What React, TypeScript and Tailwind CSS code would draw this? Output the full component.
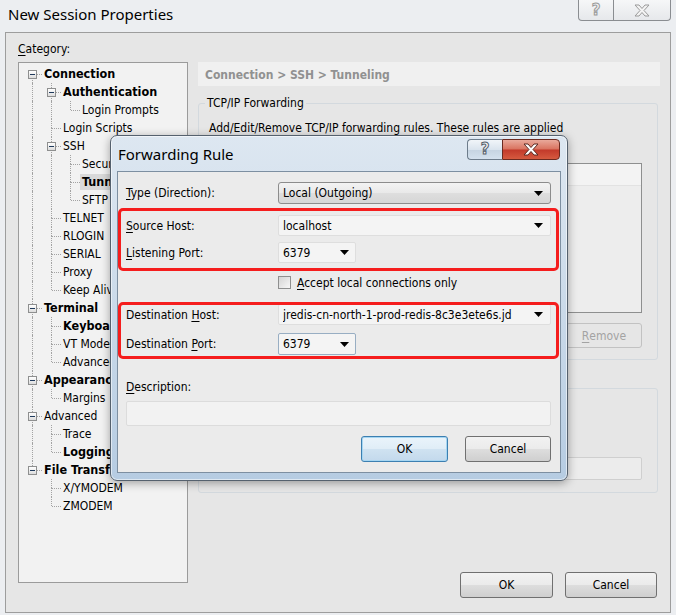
import React from "react";

type TNode = { label: string; bold?: boolean; selected?: boolean; children?: TNode[] };

const TREE: TNode[] = [
  {
    label: "Connection",
    bold: true,
    children: [
      { label: "Authentication", bold: true, children: [{ label: "Login Prompts" }] },
      { label: "Login Scripts" },
      {
        label: "SSH",
        children: [{ label: "Security" }, { label: "Tunneling", bold: true, selected: true }, { label: "SFTP" }],
      },
      { label: "TELNET" },
      { label: "RLOGIN" },
      { label: "SERIAL" },
      { label: "Proxy" },
      { label: "Keep Alive" },
    ],
  },
  { label: "Terminal", bold: true, children: [{ label: "Keyboard", bold: true }, { label: "VT Modes" }, { label: "Advanced" }] },
  { label: "Appearance", bold: true, children: [{ label: "Margins" }] },
  { label: "Advanced", children: [{ label: "Trace" }, { label: "Logging", bold: true }] },
  { label: "File Transfer", bold: true, children: [{ label: "X/YMODEM" }, { label: "ZMODEM" }] },
];

type Row = { node: TNode; anc: boolean[]; hasNext: boolean; first: boolean };

function flatten(nodes: TNode[], anc: boolean[], out: Row[]): Row[] {
  nodes.forEach((n, i) => {
    const hasNext = i < nodes.length - 1;
    out.push({ node: n, anc, hasNext, first: anc.length === 0 && i === 0 });
    if (n.children) flatten(n.children, [...anc, hasNext], out);
  });
  return out;
}

function TreeRow({ r }: { r: Row }) {
  return (
    <div className="flex h-[18px] items-center whitespace-nowrap">
      {r.anc.map((c, i) => (
        <div key={i} className="relative h-full w-[19px] shrink-0">
          {c && <div className="absolute left-[9px] top-0 h-full border-l border-dotted border-[#a3a3a3]" />}
        </div>
      ))}
      <div className="relative h-full w-[19px] shrink-0">
        {!r.first && <div className="absolute left-[9px] top-0 h-[9px] border-l border-dotted border-[#a3a3a3]" />}
        {r.hasNext && <div className="absolute left-[9px] top-[9px] h-[9px] border-l border-dotted border-[#a3a3a3]" />}
        <div className="absolute left-[10px] top-[9px] w-[9px] border-t border-dotted border-[#a3a3a3]" />
        {r.node.children && (
          <div className="absolute left-[5px] top-[5px] flex h-[9px] w-[9px] items-center justify-center border border-[#8e8f8f] bg-[linear-gradient(#ffffff,#dcdcdc)]">
            <div className="h-px w-[5px] bg-[#1f3a5c]" />
          </div>
        )}
      </div>
      <span
        className={
          (r.node.bold ? "font-bold text-[12.5px] " : "") +
          (r.node.selected ? "bg-[#d9d9d9] " : "") +
          "px-[2px] leading-[16px] text-black"
        }
      >
        {r.node.label}
      </span>
    </div>
  );
}

function Arrow() {
  return (
    <svg width="9" height="5" viewBox="0 0 9 5" className="shrink-0">
      <polygon points="0,0 9,0 4.5,5" fill="#000" />
    </svg>
  );
}

function U({ children }: { children: React.ReactNode }) {
  return <span className="underline underline-offset-[2px]">{children}</span>;
}

function WinButton({ children, className = "" }: { children: React.ReactNode; className?: string }) {
  return (
    <div
      className={
        "flex items-center justify-center rounded-[3px] border border-[#707070] bg-[linear-gradient(180deg,#f2f2f2_0%,#ebebeb_48%,#dddddd_52%,#cfcfcf_100%)] text-black " +
        className
      }
    >
      {children}
    </div>
  );
}

function CaptionX({ color, stroke }: { color: string; stroke: string }) {
  return (
    <svg width="16" height="13" viewBox="0 0 16 13">
      <polygon
        points="1,1 5,1 8,4.5 11,1 15,1 10,6.5 15,12 11,12 8,8.5 5,12 1,12 6,6.5"
        fill={color}
        stroke={stroke}
        strokeWidth="1"
        strokeLinejoin="round"
      />
    </svg>
  );
}

export default function App() {
  const rows = flatten(TREE, [], []);
  return (
    <div className="relative h-[615px] w-[676px] overflow-hidden bg-[#eceef1] font-['DejaVu_Sans_Condensed','DejaVu_Sans',sans-serif] text-[12px] text-black">
      {/* Title bar */}
      <div className="flex h-[32px] items-start">
        <div className="ml-[8px] mt-[4px] font-['Noto_Sans',sans-serif] text-[15px] leading-[20px] text-black">
          New Session Properties
        </div>
        <div className="ml-auto mr-[5px] flex h-[21px]">
          <div className="flex w-[36px] items-center justify-center rounded-bl-[4px] border border-t-0 border-[#8a8d91] bg-[linear-gradient(#f6f7f8,#e6e8eb)]">
            <span className="font-['DejaVu_Sans',sans-serif] text-[15px] font-bold leading-none text-transparent [-webkit-text-stroke:1px_#9a9a9a]">
              ?
            </span>
          </div>
          <div className="flex w-[57px] items-center justify-center rounded-br-[4px] border border-l-0 border-t-0 border-[#8a8d91] bg-[linear-gradient(#f6f7f8,#e6e8eb)]">
            <CaptionX color="#f4f4f4" stroke="#9a9a9a" />
          </div>
        </div>
      </div>

      {/* Client area */}
      <div className="ml-[5px] h-[581px] w-[666px] border border-[#9d9d9d] bg-[#e6e6e6] pl-[12px] pt-[8px]">
        <div className="h-[16px] leading-[16px]">
          <U>C</U>ategory:
        </div>
        <div className="mt-[5px] flex">
          {/* Tree */}
          <div className="h-[521px] w-[170px] shrink-0 border border-[#9b9b9b] bg-[#f2f2f2] pl-[4px] pt-[2px]">
            {rows.map((r, i) => (
              <TreeRow key={i} r={r} />
            ))}
          </div>

          {/* Right panel */}
          <div className="ml-[10px] flex w-[462px] flex-col">
            <div className="flex h-[24px] items-center bg-[#f0f0f0] px-[7px] pt-px font-bold text-[#919191]">
              Connection &gt; SSH &gt; Tunneling
            </div>

            <div className="relative mt-[17px] h-[257px] w-[460px] rounded-[3px] border border-[#d3d9de] pl-[10px] pr-[15px] pt-[16px]">
              <div className="absolute -top-[9px] left-[6px] bg-[#e6e6e6] px-[2px] leading-[16px]">TCP/IP Forwarding</div>
              <div className="leading-[16px]">Add/Edit/Remove TCP/IP forwarding rules. These rules are applied</div>
              <div className="leading-[16px]">to the current session when it is connected.</div>
              <div className="mt-[11px] h-[150px] border border-[#8e8f8f] bg-[#ededed]">
                <div className="h-[22px] border-b border-[#e2e2e2] bg-[#f3f3f3]" />
              </div>
              <div className="mt-[10px] flex justify-end gap-[10px]">
                <div className="flex h-[25px] w-[76px] items-center justify-center rounded-[3px] border border-[#c2c2c2] text-[#a3a3a3]">
                  <U>A</U>dd...
                </div>
                <div className="flex h-[25px] w-[76px] items-center justify-center rounded-[3px] border border-[#c2c2c2] text-[#a3a3a3]">
                  <U>E</U>dit...
                </div>
                <div className="flex h-[25px] w-[76px] items-center justify-center rounded-[3px] border border-[#c2c2c2] text-[#a3a3a3]">
                  <U>R</U>emove
                </div>
              </div>
            </div>

            <div className="relative mt-[28px] h-[105px] w-[460px] rounded-[3px] border border-[#d3d9de] pl-[10px] pr-[15px] pt-[20px]">
              <div className="absolute -top-[9px] left-[6px] bg-[#e6e6e6] px-[2px] leading-[16px]">X11 Forwarding</div>
              <div className="leading-[16px]">Remote command:</div>
              <div className="mt-[32px] h-[23px] rounded-[2px] border border-[#cfcfcf] bg-[#ececec]" />
            </div>

            <div className="mt-[79px] flex justify-end gap-[12px] pr-[3px]">
              <WinButton className="h-[26px] w-[93px]">OK</WinButton>
              <WinButton className="h-[26px] w-[92px]">Cancel</WinButton>
            </div>
          </div>
        </div>
      </div>

      {/* Forwarding Rule dialog */}
      <div className="absolute left-[110px] top-[135px] flex h-[346px] w-[458px] flex-col rounded-[7px] border border-[#55616e] bg-[linear-gradient(180deg,#dde7f1_0%,#ccdbea_45%,#b6cce2_100%)] shadow-[0_2px_10px_rgba(0,0,0,0.35),inset_0_0_0_1px_rgba(255,255,255,0.55)]">
        <div className="flex h-[35px] items-start">
          <div className="ml-[7px] mt-[8px] font-['Noto_Sans',sans-serif] text-[15px] leading-[20px] text-black">
            Forwarding Rule
          </div>
          <div className="ml-auto mr-[7px] mt-[3px] flex h-[21px]">
            <div className="flex w-[35px] items-center justify-center rounded-l-[4px] border border-r-0 border-[#6d7c8b] bg-[linear-gradient(180deg,#f1f5f9_0%,#dae4ee_50%,#c5d3e1_51%,#d4e1ee_100%)]">
              <span className="font-['DejaVu_Sans',sans-serif] text-[15px] font-bold leading-none text-[#f4f6f8] [-webkit-text-stroke:1px_#56606b]">
                ?
              </span>
            </div>
            <div className="flex w-[58px] items-center justify-center rounded-r-[4px] border border-[#6b2a20] bg-[linear-gradient(180deg,#e9a99b_0%,#d9735f_48%,#c2392a_52%,#d55a3f_100%)]">
              <CaptionX color="#ffffff" stroke="#5a2a22" />
            </div>
          </div>
        </div>
        <div className="mx-[6px] mb-[7px] h-[302px] border border-[#7d8fa1] bg-[#ebebeb] pl-[8px] pr-[9px] pt-[10px]">
          {/* Type */}
          <div className="grid grid-cols-[152px_1fr] items-center">
            <div>
              <U>T</U>ype (Direction):
            </div>
            <div className="flex h-[22px] items-center justify-between rounded-[3px] border border-[#8c8c8c] bg-[linear-gradient(180deg,#f3f3f3_0%,#e9e9e9_50%,#dedede_51%,#d6d6d6_100%)] pl-[4px] pr-[7px]">
              <span>Local (Outgoing)</span>
              <Arrow />
            </div>
          </div>
          {/* Source host */}
          <div className="mt-[11px] grid grid-cols-[152px_1fr] items-center">
            <div>
              <U>S</U>ource Host:
            </div>
            <div className="flex h-[21px] items-center justify-between rounded-[2px] border border-[#dedede] bg-[#f4f4f4] pl-[4px] pr-[7px]">
              <span>localhost</span>
              <Arrow />
            </div>
          </div>
          {/* Listening port */}
          <div className="mt-[6px] grid grid-cols-[152px_1fr] items-center">
            <div>
              <U>L</U>istening Port:
            </div>
            <div className="flex h-[21px] w-[78px] items-center justify-between rounded-[2px] border border-[#dedede] bg-[#f4f4f4] pl-[4px] pr-[6px]">
              <span>6379</span>
              <Arrow />
            </div>
          </div>
          {/* Checkbox */}
          <div className="mt-[12px] grid grid-cols-[152px_1fr] items-center">
            <div />
            <div className="flex h-[15px] items-center">
              <div className="h-[13px] w-[13px] border border-[#8e8f8f] bg-[linear-gradient(135deg,#d4d4d4,#f7f7f7)]" />
              <span className="ml-[6px]">
                <U>A</U>ccept local connections only
              </span>
            </div>
          </div>
          {/* Destination host */}
          <div className="mt-[14px] grid grid-cols-[152px_1fr] items-center">
            <div>
              Destination <U>H</U>ost:
            </div>
            <div className="flex h-[21px] items-center justify-between rounded-[2px] border border-[#dedede] bg-[#f4f4f4] pl-[4px] pr-[7px]">
              <span className="overflow-hidden whitespace-nowrap">jredis-cn-north-1-prod-redis-8c3e3ete6s.jd</span>
              <Arrow />
            </div>
          </div>
          {/* Destination port */}
          <div className="mt-[8px] grid grid-cols-[152px_1fr] items-center">
            <div>
              Destination <U>P</U>ort:
            </div>
            <div className="flex h-[22px] w-[78px] items-center justify-between rounded-[2px] border border-[#98aec3] bg-[#f4f4f4] pl-[4px] pr-[6px]">
              <span>6379</span>
              <Arrow />
            </div>
          </div>
          {/* Description */}
          <div className="mt-[23px] h-[18px] leading-[18px]">
            <U>D</U>escription:
          </div>
          <div className="mt-[5px] h-[25px] rounded-[2px] border border-[#dcdcdc] bg-[#f2f2f2]" />
          <div className="mt-[10px] flex justify-end gap-[17px]">
            <div className="flex h-[26px] w-[87px] items-center justify-center rounded-[3px] border border-[#3c7fb1] bg-[linear-gradient(180deg,#eaf4fb_0%,#e0edf7_48%,#cfe2f1_52%,#c3d9ec_100%)] shadow-[inset_0_0_0_1px_#a6d6f2]">
              OK
            </div>
            <WinButton className="h-[26px] w-[86px]">Cancel</WinButton>
          </div>
        </div>
        {/* Red annotation boxes */}
        <div className="pointer-events-none absolute left-[7px] top-[72px] h-[63px] w-[441px] rounded-[5px] border-[3px] border-[#f51d1d]" />
        <div className="pointer-events-none absolute left-[7px] top-[166px] h-[57px] w-[441px] rounded-[5px] border-[3px] border-[#f51d1d]" />
      </div>
    </div>
  );
}
